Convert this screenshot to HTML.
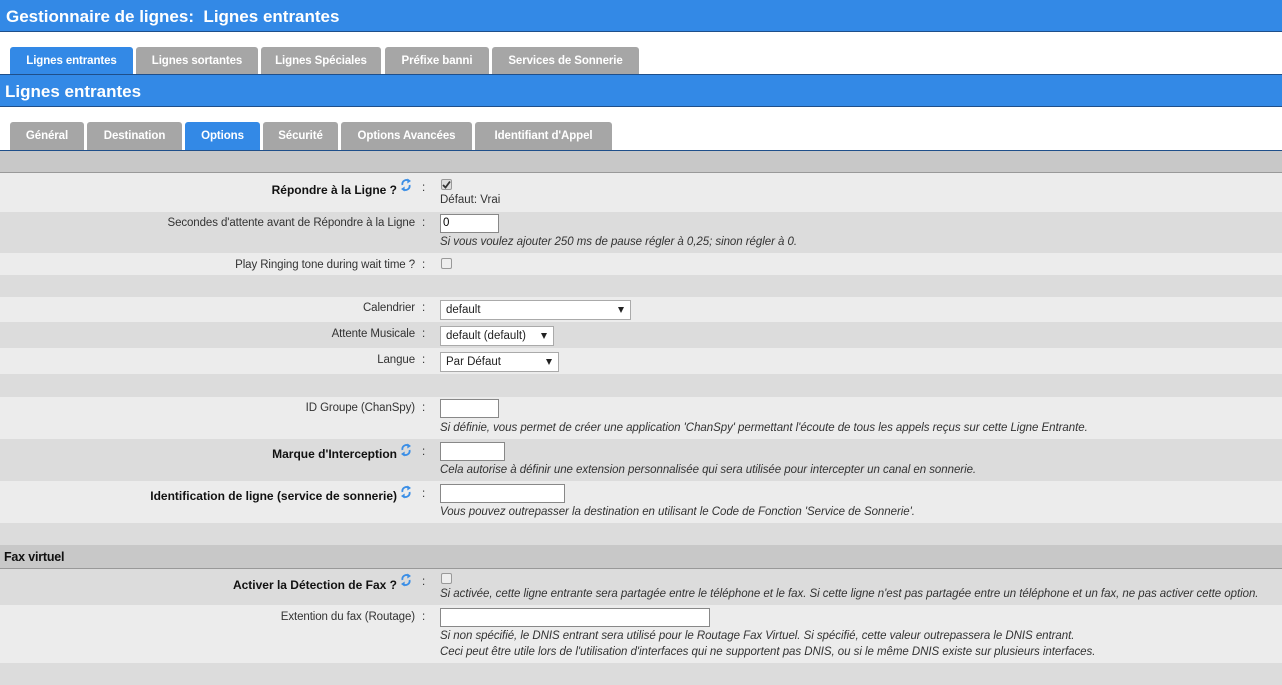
<!DOCTYPE html>
<html><head><meta charset="utf-8"><style>
body{margin:0;width:1282px;height:685px;overflow:hidden;background:#fff;font-family:"Liberation Sans",sans-serif;position:relative}
.a{position:absolute}
.bar{position:absolute;left:0;width:1282px;background:#3389e6;color:#fff;font-weight:bold;border-bottom:1px solid #1f4f8a;box-sizing:border-box}
.tab{position:absolute;background:#a6a6a6;color:#fff;font-weight:bold;font-size:11.5px;letter-spacing:-0.1px;text-align:center;border-radius:3px 3px 0 0;box-sizing:border-box}
.tab.on{background:#3389e6}
.r{position:absolute;left:0;width:1282px}
.L{background:#ececec}.D{background:#dcdcdc}
.lab{position:absolute;left:0;width:415px;text-align:right;font-size:11.5px;color:#333;letter-spacing:-0.1px}
.lab.b{font-weight:bold;color:#111;letter-spacing:0;font-size:12px;width:397px}
.ic{position:absolute;left:400px}
.col{position:absolute;left:422px;font-size:11.5px;color:#333}
.f{position:absolute;left:440px}
.inp{position:absolute;left:440px;height:19px;border:1px solid #888;background:#fff;box-sizing:border-box;font-size:11.5px;padding:2px 2px}
.sel{position:absolute;left:440px;height:20px;border:1px solid #aaa;background:#fff;box-sizing:border-box;font-size:11.5px;padding:3px 5px;color:#222}
.sel:after{content:"";position:absolute;right:6px;top:6px;border-left:3.5px solid transparent;border-right:3.5px solid transparent;border-top:6px solid #222}
.h{position:absolute;left:440px;font-size:11.5px;font-style:italic;color:#333;white-space:nowrap;letter-spacing:-0.05px}
.cb{position:absolute;left:441px;width:11px;height:11px;border:1px solid #999;border-radius:2px;background:#eee;box-sizing:border-box}
</style></head><body>
<div class="bar" style="top:0;height:32px;font-size:17px;padding:7px 0 0 6px">Gestionnaire de lignes:&nbsp; Lignes entrantes</div>
<div class="tab on" style="left:10px;top:47px;width:123px;height:27px;padding-top:8px">Lignes entrantes</div>
<div class="tab" style="left:136px;top:47px;width:122px;height:27px;padding-top:8px">Lignes sortantes</div>
<div class="tab" style="left:261px;top:47px;width:120px;height:27px;padding-top:8px">Lignes Spéciales</div>
<div class="tab" style="left:385px;top:47px;width:104px;height:27px;padding-top:8px">Préfixe banni</div>
<div class="tab" style="left:492px;top:47px;width:147px;height:27px;padding-top:8px">Services de Sonnerie</div>
<div class="bar" style="top:74px;height:33px;font-size:17px;padding:7px 0 0 5px;border-top:1px solid #1f4f8a">Lignes entrantes</div>
<div class="tab" style="left:10px;top:122px;width:74px;height:28px;padding-top:8px">Général</div>
<div class="tab" style="left:87px;top:122px;width:95px;height:28px;padding-top:8px">Destination</div>
<div class="tab on" style="left:185px;top:122px;width:75px;height:28px;padding-top:8px">Options</div>
<div class="tab" style="left:263px;top:122px;width:75px;height:28px;padding-top:8px">Sécurité</div>
<div class="tab" style="left:341px;top:122px;width:131px;height:28px;padding-top:8px">Options Avancées</div>
<div class="tab" style="left:475px;top:122px;width:137px;height:28px;padding-top:8px">Identifiant d'Appel</div>
<div class="r" style="top:150px;height:1px;background:#1f4f8a"></div>
<div class="r" style="top:151px;height:21px;background:#c8c8c8;border-bottom:1px solid #999"></div>

<svg width="0" height="0" style="position:absolute"><defs><g id="rf"><path d="M2.5 7 A4 4 0 0 1 9 3" fill="none" stroke="#3a8ee6" stroke-width="1.8"/><path d="M9.5 7 A4 4 0 0 1 3 11" fill="none" stroke="#3a8ee6" stroke-width="1.8"/><path d="M7.5 0.5 L11 3 L7.3 5.5" fill="#3a8ee6"/><path d="M4.5 13.5 L1 11 L4.7 8.5" fill="#3a8ee6"/></g></defs></svg>

<div class="r L" style="top:173px;height:39px">
<div class="lab b" style="top:10px">Répondre à la Ligne ?</div><svg class="ic" style="top:5px" width="13" height="14"><use href="#rf"/></svg><div class="col" style="top:9px">:</div>
<div class="cb" style="top:6px;background:#ddd"><svg width="11" height="11" style="position:absolute;left:-1px;top:-1px"><path d="M2 6 L4.5 8.5 L9 2.5" fill="none" stroke="#333" stroke-width="1.8"/></svg></div>
<div class="f" style="top:21px;font-size:11.5px;color:#333">Défaut: Vrai</div></div>
<div class="r D" style="top:212px;height:41px">
<div class="lab" style="top:5px">Secondes d'attente avant de Répondre à la Ligne</div><div class="col" style="top:5px">:</div>
<div class="inp" style="top:2px;width:59px">0</div>
<div class="h" style="top:24px">Si vous voulez ajouter 250 ms de pause régler à 0,25; sinon régler à 0.</div></div>
<div class="r L" style="top:253px;height:22px">
<div class="lab" style="top:6px">Play Ringing tone during wait time ?</div><div class="col" style="top:6px">:</div><div class="cb" style="top:5px"></div></div>
<div class="r D" style="top:275px;height:22px"></div>
<div class="r L" style="top:297px;height:25px">
<div class="lab" style="top:5px">Calendrier</div><div class="col" style="top:5px">:</div><div class="sel" style="top:3px;width:191px">default</div></div>
<div class="r D" style="top:322px;height:26px">
<div class="lab" style="top:6px">Attente Musicale</div><div class="col" style="top:6px">:</div><div class="sel" style="top:4px;width:114px">default (default)</div></div>
<div class="r L" style="top:348px;height:26px">
<div class="lab" style="top:6px">Langue</div><div class="col" style="top:6px">:</div><div class="sel" style="top:4px;width:119px">Par Défaut</div></div>
<div class="r D" style="top:374px;height:23px"></div>
<div class="r L" style="top:397px;height:42px">
<div class="lab" style="top:5px">ID Groupe (ChanSpy)</div><div class="col" style="top:5px">:</div><div class="inp" style="top:2px;width:59px"></div>
<div class="h" style="top:25px">Si définie, vous permet de créer une application 'ChanSpy' permettant l'écoute de tous les appels reçus sur cette Ligne Entrante.</div></div>
<div class="r D" style="top:439px;height:42px">
<div class="lab b" style="top:8px">Marque d'Interception</div><svg class="ic" style="top:4px" width="13" height="14"><use href="#rf"/></svg><div class="col" style="top:7px">:</div><div class="inp" style="top:3px;width:65px"></div>
<div class="h" style="top:25px">Cela autorise à définir une extension personnalisée qui sera utilisée pour intercepter un canal en sonnerie.</div></div>
<div class="r L" style="top:481px;height:42px">
<div class="lab b" style="top:8px">Identification de ligne (service de sonnerie)</div><svg class="ic" style="top:4px" width="13" height="14"><use href="#rf"/></svg><div class="col" style="top:7px">:</div><div class="inp" style="top:3px;width:125px"></div>
<div class="h" style="top:25px">Vous pouvez outrepasser la destination en utilisant le Code de Fonction 'Service de Sonnerie'.</div></div>
<div class="r D" style="top:523px;height:22px"></div>
<div class="r" style="top:545px;height:23px;background:#c8c8c8;border-bottom:1px solid #999"><div class="a" style="left:4px;top:5px;font-weight:bold;font-size:12.5px;color:#111;letter-spacing:-0.2px">Fax virtuel</div></div>
<div class="r D" style="top:569px;height:36px">
<div class="lab b" style="top:9px">Activer la Détection de Fax ?</div><svg class="ic" style="top:4px" width="13" height="14"><use href="#rf"/></svg><div class="col" style="top:7px">:</div><div class="cb" style="top:4px"></div>
<div class="h" style="top:19px">Si activée, cette ligne entrante sera partagée entre le téléphone et le fax. Si cette ligne n'est pas partagée entre un téléphone et un fax, ne pas activer cette option.</div></div>
<div class="r L" style="top:605px;height:58px">
<div class="lab" style="top:6px">Extention du fax (Routage)</div><div class="col" style="top:6px">:</div><div class="inp" style="top:3px;width:270px"></div>
<div class="h" style="top:25px">Si non spécifié, le DNIS entrant sera utilisé pour le Routage Fax Virtuel. Si spécifié, cette valeur outrepassera le DNIS entrant.</div>
<div class="h" style="top:41px">Ceci peut être utile lors de l'utilisation d'interfaces qui ne supportent pas DNIS, ou si le même DNIS existe sur plusieurs interfaces.</div></div>
<div class="r D" style="top:663px;height:22px"></div>
</body></html>
